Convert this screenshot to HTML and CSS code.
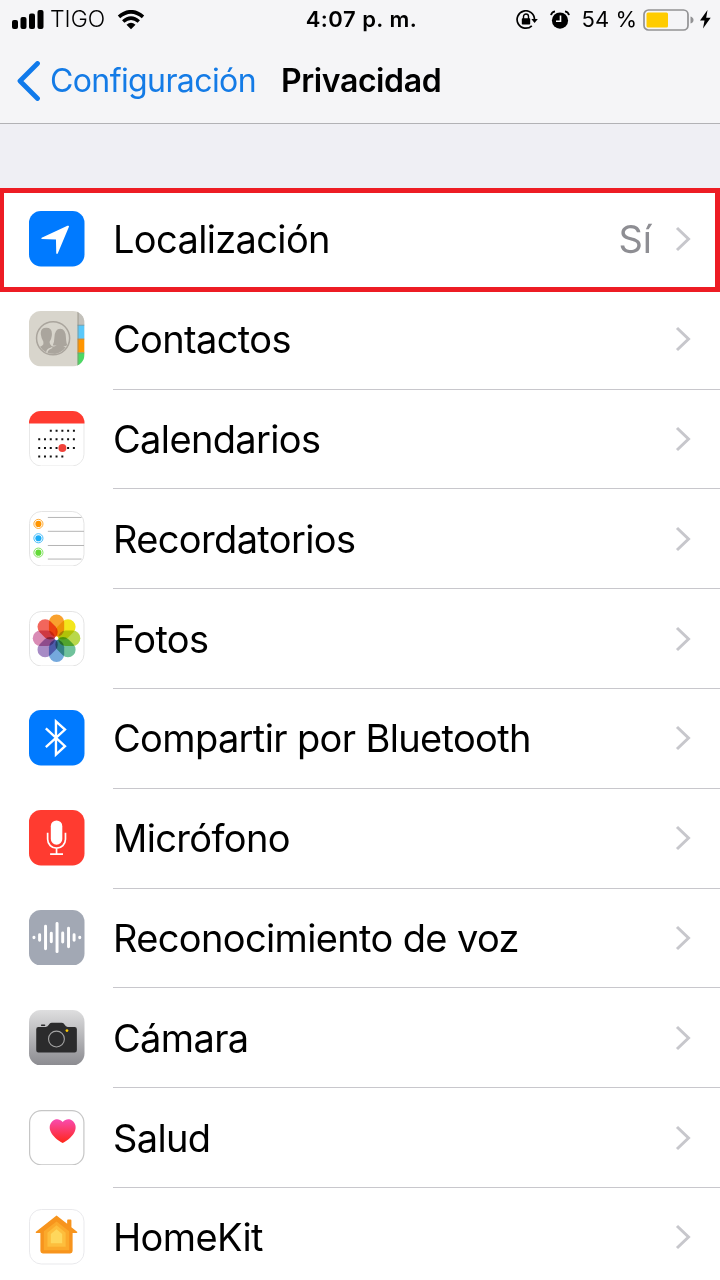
FILE: index.html
```html
<!DOCTYPE html>
<html lang="es">
<head>
    <meta charset="UTF-8">
    <meta name="viewport" content="width=device-width, initial-scale=1.0">
    <title>Privacidad</title>
    <link rel="stylesheet" href="styles.css">
</head>
<body>

    <header class="header">
        <div class="status-bar">
            <div class="status-left">
                <svg class="signal" width="32" height="20" viewBox="0 0 32 20">
                    <rect x="0" y="10" width="6" height="9" rx="2"/>
                    <rect x="8.5" y="7" width="6" height="12" rx="2"/>
                    <rect x="17" y="3.5" width="6" height="15.5" rx="2"/>
                    <rect x="25.5" y="0" width="6" height="19" rx="2"/>
                </svg>
                <span class="carrier">TIGO</span>
                <svg class="wifi" width="28" height="20" viewBox="0 0 28 20">
                    <path d="M2 6.8Q14-3.2 26 6.8" fill="none" stroke="#000" stroke-width="3.7"/>
                    <path d="M6.2 11.5Q14 4.8 21.8 11.5" fill="none" stroke="#000" stroke-width="3.5"/>
                    <path d="M9.5 14.7Q14 10.8 18.5 14.7L14 19.2z"/>
                </svg>
            </div>
            <div class="status-time">4:07 p. m.</div>
            <div class="status-right">
                <svg class="lock" width="22" height="20" viewBox="0 0 22 20">
                    <path d="M18.5 9.5A8.7 8.7 0 1 0 15.8 15.8" fill="none" stroke="#000" stroke-width="1.7"/>
                    <path d="M15.3 9h6.5l-3.2 4z"/>
                    <rect x="5.8" y="8.3" width="8.4" height="6.2" rx=".8"/>
                    <path d="M7.5 9V6.5a2.5 2.5 0 0 1 5 0V9" fill="none" stroke="#000" stroke-width="1.4"/>
                </svg>
                <svg class="alarm" width="20" height="20" viewBox="0 0 20 20">
                    <circle cx="10" cy="10.6" r="8.1"/>
                    <path d="M1 5.2Q1.6 2 5 1.3M19 5.2Q18.4 2 15 1.3" fill="none" stroke="#000" stroke-width="1.8"/>
                    <path d="M10.5 5.5v5.8H6" fill="none" stroke="#fff" stroke-width="1.6"/>
                </svg>
                <span class="percent">54 %</span>
                <svg class="battery" width="52" height="22" viewBox="0 0 52 22">
                    <rect x="1" y="1" width="44" height="20" rx="4.5" fill="none" stroke="#929294" stroke-width="1.7"/>
                    <rect x="3.5" y="3.5" width="21.5" height="15" rx="1.5" fill="#fc0"/>
                    <path d="M47.5 7.5q3 1 3 3.500t-3 3.500z" fill="#929294"/>
                </svg>
                <svg class="bolt" width="11" height="19" viewBox="0 0 11 19">
                    <path d="M7.5 0L0 10.500h4.500L3 18.500l7.700-10.700H6.200z"/>
                </svg>
            </div>
        </div>
        <nav class="nav">
            <a class="back">
                <svg width="24" height="40" viewBox="0 0 24 40">
                    <path d="M20.500 2.500L3 20l17.500 17.500" fill="none" stroke="#107aeb" stroke-width="4.800" stroke-linecap="round" stroke-linejoin="round"/>
                </svg>
                <span class="back-label">Configuración</span>
            </a>
            <h1 class="title">Privacidad</h1>
        </nav>
    </header>

    <ul class="list">
        <li class="row highlight">
            <svg class="icon" viewBox="0 0 56 56">
                <rect width="56" height="56" rx="12" fill="#007aff"/>
                <path d="M40.300 15.800L29 43Q28.300 44 27.500 43L27.200 28.800L12.800 28.300Q12 27.700 12.800 27L38.800 15Q40.800 14.500 40.300 15.800z" fill="#fff"/>
            </svg>
            <div class="cell"><span class="label">Localización</span><span class="value">Sí</span><svg class="chevron" viewBox="0 0 16 26"><path d="M2 2l11.500 11L2 24"/></svg></div>
        </li>
        <li class="row">
            <svg class="icon" viewBox="0 0 56 56">
                <clipPath id="tile"><rect width="56" height="56" rx="12"/></clipPath>
                <clipPath id="face"><circle cx="24.300" cy="27.500" r="15.600"/></clipPath>
                <g clip-path="url(#tile)">
                    <rect width="56" height="56" fill="#d8d5cc"/>
                    <rect x="49" width="7" height="14" fill="#c3c1bb"/>
                    <rect x="49" y="14" width="7" height="14" fill="#5ac8fa"/>
                    <rect x="49" y="28" width="7" height="14" fill="#ff9500"/>
                    <rect x="49" y="42" width="7" height="14" fill="#4cd964"/>
                    <path d="M49.500 0v56M49 14.300h7M49 28.300h7M49 42.300h7" stroke="#8a8677" stroke-opacity=".65"/>
                    <g clip-path="url(#face)" fill="#aaa59d">
                        <path d="M12 24Q11 17 17.500 17Q24 17 23 25Q22.500 29 20.800 31Q20.500 34 23 35.500Q28 37 28 45H5V38Q13 36 14.500 33.500V31Q12.500 28 12 24z"/>
                        <path d="M31.500 18Q37 18 37.300 27Q37.500 33 39 34.500Q37 36 34.500 35.500Q39 37 41 40L34 46H25Q25 38 21.500 36Q26 36 28 34.800Q25.500 35 24 34.500Q25.500 32 25.600 27Q26 18 31.500 18z"/>
                    </g>
                    <path d="M18 44Q17.500 40 20 38.500L23.500 36.800" stroke="#d8d5cc" stroke-width="1.300" fill="none"/>
                    <circle cx="24.300" cy="27.500" r="16.700" fill="none" stroke="#aaa59d" stroke-width="1.500"/>
                </g>
            </svg>
            <div class="cell"><span class="label">Contactos</span><svg class="chevron" viewBox="0 0 16 26"><path d="M2 2l11.500 11L2 24"/></svg></div>
        </li>
        <li class="row">
            <svg class="icon" viewBox="0 0 56 56">
                <rect x=".5" y=".5" width="55" height="55" rx="12" fill="#fff" stroke="#e8e8e8"/>
                <path d="M0 12.500V12A12 12 0 0 1 12 0H44A12 12 0 0 1 56 12v.500z" fill="#ff3b30"/>
                <g stroke="#111" stroke-width="2" stroke-dasharray="2 3.830" fill="none">
                    <path d="M21 20h26"/>
                    <path d="M9.300 28.500h37.500"/>
                    <path d="M9.300 37.300h37.500"/>
                    <path d="M9.300 46h25.500"/>
                </g>
                <circle cx="33.700" cy="37.300" r="4" fill="#f0423a"/>
            </svg>
            <div class="cell"><span class="label">Calendarios</span><svg class="chevron" viewBox="0 0 16 26"><path d="M2 2l11.500 11L2 24"/></svg></div>
        </li>
        <li class="row">
            <svg class="icon" viewBox="0 0 56 56">
                <rect x=".5" y=".5" width="55" height="55" rx="12" fill="#fff" stroke="#e4e4e4"/>
                <path d="M19 6.500h34M19 20.500h36.500M19 34.800h36.500M19 48.500h34" stroke="#b4b4b4"/>
                <g fill="#ff9500"><circle cx="9.500" cy="13" r="3.100"/><circle cx="9.500" cy="13" r="4.600" fill="none" stroke="#ff9500" stroke-width=".8"/></g>
                <g fill="#1badf8"><circle cx="9.500" cy="27.500" r="3.100"/><circle cx="9.500" cy="27.500" r="4.600" fill="none" stroke="#1badf8" stroke-width=".8"/></g>
                <g fill="#63da38"><circle cx="9.500" cy="42" r="3.100"/><circle cx="9.500" cy="42" r="4.600" fill="none" stroke="#63da38" stroke-width=".8"/></g>
            </svg>
            <div class="cell"><span class="label">Recordatorios</span><svg class="chevron" viewBox="0 0 16 26"><path d="M2 2l11.500 11L2 24"/></svg></div>
        </li>
        <li class="row">
            <svg class="icon" viewBox="0 0 56 56">
                <rect x=".5" y=".5" width="55" height="55" rx="12" fill="#fff" stroke="#e4e4e4"/>
                <g class="petals" transform="translate(27.800 27.500)">
                    <rect x="-7.700" y="-24" width="15.400" height="22.500" rx="7.700" fill="#f9a12e"/>
                    <rect x="-7.700" y="-24" width="15.400" height="22.500" rx="7.700" fill="#f3e61c" transform="rotate(45)"/>
                    <rect x="-7.700" y="-24" width="15.400" height="22.500" rx="7.700" fill="#b9d84b" transform="rotate(90)"/>
                    <rect x="-7.700" y="-24" width="15.400" height="22.500" rx="7.700" fill="#70c29b" transform="rotate(135)"/>
                    <rect x="-7.700" y="-24" width="15.400" height="22.500" rx="7.700" fill="#75a9dd" transform="rotate(180)"/>
                    <rect x="-7.700" y="-24" width="15.400" height="22.500" rx="7.700" fill="#a78bc5" transform="rotate(225)"/>
                    <rect x="-7.700" y="-24" width="15.400" height="22.500" rx="7.700" fill="#d98bb5" transform="rotate(270)"/>
                    <rect x="-7.700" y="-24" width="15.400" height="22.500" rx="7.700" fill="#f2665c" transform="rotate(315)"/>
                </g>
                <circle cx="27.800" cy="27.500" r="1.700" fill="#fff"/>
            </svg>
            <div class="cell"><span class="label">Fotos</span><svg class="chevron" viewBox="0 0 16 26"><path d="M2 2l11.500 11L2 24"/></svg></div>
        </li>
        <li class="row">
            <svg class="icon" viewBox="0 0 56 56">
                <rect width="56" height="56" rx="12" fill="#007aff"/>
                <path d="M17 18.500L36.300 36.500L27.200 45V11.500L36.300 19.800L17 37.500" fill="none" stroke="#fff" stroke-width="2.400"/>
            </svg>
            <div class="cell"><span class="label">Compartir por Bluetooth</span><svg class="chevron" viewBox="0 0 16 26"><path d="M2 2l11.500 11L2 24"/></svg></div>
        </li>
        <li class="row">
            <svg class="icon" viewBox="0 0 56 56">
                <rect width="56" height="56" rx="12" fill="#ff3b30"/>
                <rect x="22" y="10.500" width="11.600" height="24.500" rx="5.800" fill="#fff"/>
                <path d="M18.800 23v6.500a9 9 0 0 0 18 0V23M27.800 38.500v6M21.300 44.500h13" fill="none" stroke="#fff" stroke-width="1.700"/>
            </svg>
            <div class="cell"><span class="label">Micrófono</span><svg class="chevron" viewBox="0 0 16 26"><path d="M2 2l11.500 11L2 24"/></svg></div>
        </li>
        <li class="row">
            <svg class="icon" viewBox="0 0 56 56">
                <rect width="56" height="56" rx="12" fill="#a2a8b4"/>
                <path d="M5 27.400v.600M10.700 25v5.600M16.700 16.500v22.500M22.500 23.500v8.500M28.300 13.500v28.500M34 23.300v9M39.900 18.500v18.500M45.500 25v5.600M51.200 27.400v.600" stroke="#fff" stroke-width="3" stroke-linecap="round"/>
            </svg>
            <div class="cell"><span class="label">Reconocimiento de voz</span><svg class="chevron" viewBox="0 0 16 26"><path d="M2 2l11.500 11L2 24"/></svg></div>
        </li>
        <li class="row">
            <svg class="icon" viewBox="0 0 56 56">
                <linearGradient id="camera" x2="0" y2="1"><stop stop-color="#dededf"/><stop offset="1" stop-color="#8b8b90"/></linearGradient>
                <rect width="56" height="56" rx="12" fill="url(#camera)"/>
                <rect x="12" y="14.600" width="4.500" height="1.600" rx=".8" fill="#2b2b2c"/>
                <path d="M9.500 17.200H17Q19 17 20 15L21 13.500Q21.600 12.800 23 12.800H33Q34.400 12.800 35 13.500L36 15Q37 17 39 17.200H46Q48.300 17.200 48.300 19.500V40.500Q48.300 43 46 43H9.500Q7.300 43 7.300 40.500V19.500Q7.300 17.200 9.500 17.200z" fill="#2b2b2c"/>
                <circle cx="27.700" cy="29.300" r="8" fill="none" stroke="#a5a5a5" stroke-width="1.100"/>
                <circle cx="38.300" cy="20.800" r="1.400" fill="#fc0"/>
            </svg>
            <div class="cell"><span class="label">Cámara</span><svg class="chevron" viewBox="0 0 16 26"><path d="M2 2l11.500 11L2 24"/></svg></div>
        </li>
        <li class="row">
            <svg class="icon" viewBox="0 0 56 56">
                <linearGradient id="heart" x2="0" y2="1"><stop stop-color="#f84bb0"/><stop offset="1" stop-color="#ff2719"/></linearGradient>
                <rect x=".6" y=".6" width="54.800" height="54.800" rx="12" fill="#fff" stroke="#c6c6c6" stroke-width="1.200"/>
                <path d="M34 12.200C37 8.500 41 8.800 43.500 10.600C47 13 48 17.500 46.300 21.500C44.500 26 39 31 34 33.200C29 31 23.500 26 21.700 21.500C20 17.500 21 13 24.500 10.600C27 8.800 31 8.500 34 12.200z" fill="url(#heart)"/>
            </svg>
            <div class="cell"><span class="label">Salud</span><svg class="chevron" viewBox="0 0 16 26"><path d="M2 2l11.500 11L2 24"/></svg></div>
        </li>
        <li class="row">
            <svg class="icon" viewBox="0 0 56 56">
                <rect x=".5" y=".5" width="55" height="55" rx="12" fill="#fff" stroke="#e9e9ec"/>
                <path d="M27.800 6.500L38.500 15V11.500Q38.500 10.700 39.300 10.700H42Q42.800 10.700 42.800 11.500V18.500L48.800 23.300Q48.800 24.300 47.800 24.300H44V42.500Q44 45 41.500 45H14Q11.500 45 11.500 42.500V24.300H7.500Q6.700 24.300 6.700 23.300z" fill="#f7941d"/>
                <path d="M27.800 12.500L40.500 22.500V41.500H15V22.500z" fill="#fba92b"/>
                <path d="M27.800 16.500L37 24V38H18.600V24z" fill="#fdbe3d"/>
                <path d="M27.800 20.500L33.500 25.300V34.500H22V25.300z" fill="#fed75c"/>
            </svg>
            <div class="cell"><span class="label">HomeKit</span><svg class="chevron" viewBox="0 0 16 26"><path d="M2 2l11.500 11L2 24"/></svg></div>
        </li>
    </ul>

</body>
</html>
```
FILE: styles.css
```css
* {
    box-sizing: border-box;
}
body {
    margin: 0;
    height: 1280px;
    overflow: hidden;
    font-family: Inter, "Liberation Sans", sans-serif;
    background-color: #efeff4;
    color: #000;
}
svg {
    display: block;
    flex-shrink: 0;
}
.header {
    height: 124px;
    background: #f5f5f7;
    border-bottom: 1px solid #b2b2b5;
}
.status-bar {
    display: grid;
    grid-template-columns: 1fr auto 1fr;
    align-items: center;
    height: 39px;
    padding: 0 9px 0 12px;
    font-size: 22px;
    line-height: 39px;
}
.status-left, .status-right {
    display: flex;
    align-items: center;
}
.status-right {
    justify-content: flex-end;
}
.carrier {
    margin: 0 12px 0 6px;
    font-size: 23px;
    font-weight: 300;
}
.status-time {
    font-weight: 600;
    letter-spacing: 0.5px;
}
.alarm {
    margin: 0 12px 0 12px;
}
.percent {
    margin-right: 6px;
}
.bolt {
    margin-left: 5px;
}
.nav {
    display: flex;
    align-items: center;
    height: 83px;
    padding-left: 17px;
}
.back {
    display: flex;
    align-items: center;
    color: #147be6;
}
.back-label {
    margin-left: 9px;
    font-size: 32px;
    letter-spacing: -0.6px;
}
.title {
    margin: 0 0 0 25px;
    font-size: 32px;
    font-weight: 600;
    letter-spacing: -0.4px;
}
.list {
    margin: 66px 0 0;
    padding: 0;
    list-style: none;
    background: #fff;
}
.row {
    position: relative;
    display: flex;
    align-items: center;
    height: 99.8px;
    padding-left: 29px;
}
.icon {
    width: 55.5px;
    height: 55.5px;
    margin: -1.5px 28.5px 0 0;
}
.cell {
    display: flex;
    align-items: center;
    flex: 1;
    height: 100%;
    padding-right: 29px;
    border-bottom: 1px solid #c8c7cc;
}
.label {
    flex: 1;
    font-size: 38px;
    letter-spacing: -0.64px;
}
.value {
    margin-right: 23px;
    font-size: 38px;
    color: #8e8e93;
}
.chevron {
    width: 16px;
    height: 26px;
    fill: none;
    stroke: #c7c7cc;
    stroke-width: 3;
}
.petals rect {
    mix-blend-mode: multiply;
}
/* red frame around the selected row */
.highlight::after {
    content: "";
    position: absolute;
    z-index: 1;
    top: -2px;
    bottom: -2px;
    left: 0;
    right: 0;
    border: 5px solid #ed1c24;
    border-left-width: 4px;
}
```
